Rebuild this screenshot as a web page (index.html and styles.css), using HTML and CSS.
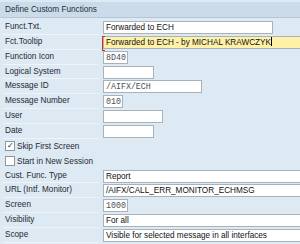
FILE: index.html
```html
<!DOCTYPE html>
<html lang="en">
<head>
  <meta charset="UTF-8">
  <meta name="viewport" content="width=device-width, initial-scale=1.0">
  <title>Define Custom Functions</title>
  <link rel="stylesheet" href="styles.css">
</head>
<body>
  <div class="panel">
    <div class="title">Define Custom Functions</div>
    <div class="form">
      <div class="row">
        <div class="label">Funct.Txt.</div>
        <div class="field w170">Forwarded to ECH</div>
      </div>
      <div class="row">
        <div class="label">Fct.Tooltip</div>
        <div class="field wide focus">Forwarded to ECH - by MICHAL KRAWCZYK<span class="caret"></span></div>
      </div>
      <div class="row">
        <div class="label">Function Icon</div>
        <div class="field mono w25">8D40</div>
      </div>
      <div class="row">
        <div class="label">Logical System</div>
        <div class="field w51"></div>
      </div>
      <div class="row">
        <div class="label">Message ID</div>
        <div class="field mono w99">/AIFX/ECH</div>
      </div>
      <div class="row">
        <div class="label">Message Number</div>
        <div class="field mono w20">010</div>
      </div>
      <div class="row">
        <div class="label">User</div>
        <div class="field w60"></div>
      </div>
      <div class="row">
        <div class="label">Date</div>
        <div class="field w51"></div>
      </div>
      <div class="row">
        <div class="check-row"><span class="box checked">&#10003;</span>Skip First Screen</div>
      </div>
      <div class="row">
        <div class="check-row"><span class="box"></span>Start in New Session</div>
      </div>
      <div class="row">
        <div class="label">Cust. Func. Type</div>
        <div class="field wide">Report</div>
      </div>
      <div class="row">
        <div class="label">URL (Intf. Monitor)</div>
        <div class="field wide">/AIFX/CALL_ERR_MONITOR_ECHMSG</div>
      </div>
      <div class="row">
        <div class="label">Screen</div>
        <div class="field mono w25">1000</div>
      </div>
      <div class="row">
        <div class="label">Visibility</div>
        <div class="field wide">For all</div>
      </div>
      <div class="row">
        <div class="label">Scope</div>
        <div class="field wide">Visible for selected message in all interfaces</div>
      </div>
    </div>
  </div>
</body>
</html>
```

FILE: styles.css
```css
body {
  margin: 0;
  background-color: #dde9f3;
  font-family: "Liberation Sans", Arial, sans-serif;
  font-size: 8.2px;
  color: #1f2a33;
  overflow: hidden;
}

.panel {
  width: 300px;
  height: 244px;
  overflow: hidden;
}

.title {
  height: 15px;
  line-height: 15px;
  margin-top: 2px;
  padding-left: 5px;
  background-color: #ccdbe9;
  border-bottom: 1px solid #b7c6d4;
  color: #22303c;
}

.form {
  padding-top: 2px;
}

.row {
  display: flex;
  align-items: center;
  height: 14.86px;
}

.label {
  flex-shrink: 0;
  width: 96px;
  margin-left: 3px;
  margin-right: 4px;
  padding-left: 2px;
  height: 14.86px;
  line-height: 14px;
  box-sizing: border-box;
  border-bottom: 1px solid #eef4f9;
  white-space: nowrap;
}

.field {
  position: relative;
  flex-shrink: 0;
  height: 13px;
  line-height: 12px;
  box-sizing: border-box;
  border: 1px solid #a9b1b9;
  background-color: #fff;
  padding: 0 2px;
  white-space: nowrap;
  overflow: hidden;
  color: #111;
}

.mono {
  font-family: "Liberation Mono", "Courier New", monospace;
  font-size: 8.3px;
  color: #4a4f55;
}

.w20 { width: 20px; }
.w25 { width: 25px; }
.w51 { width: 51px; }
.w60 { width: 60px; }
.w99 { width: 99px; }
.w170 { width: 170px; }
.wide { width: 205px; }

.focus {
  background-color: #fff2a8;
  overflow: visible;
}

.focus::before {
  content: "";
  position: absolute;
  left: -2px;
  top: -1px;
  width: 2px;
  height: 13px;
  border: 1px solid #d9262b;
  border-right: none;
}

.caret {
  display: inline-block;
  width: 1px;
  height: 9px;
  background-color: #000;
  vertical-align: -1px;
}

.check-row {
  display: flex;
  align-items: center;
  margin-left: 5px;
  height: 14.86px;
  white-space: nowrap;
}

.box {
  width: 8px;
  height: 8px;
  border: 1px solid #8d979f;
  background-color: #fff;
  margin-right: 2px;
  font-size: 8px;
  line-height: 8px;
  text-align: center;
  color: #1c2630;
}
```
